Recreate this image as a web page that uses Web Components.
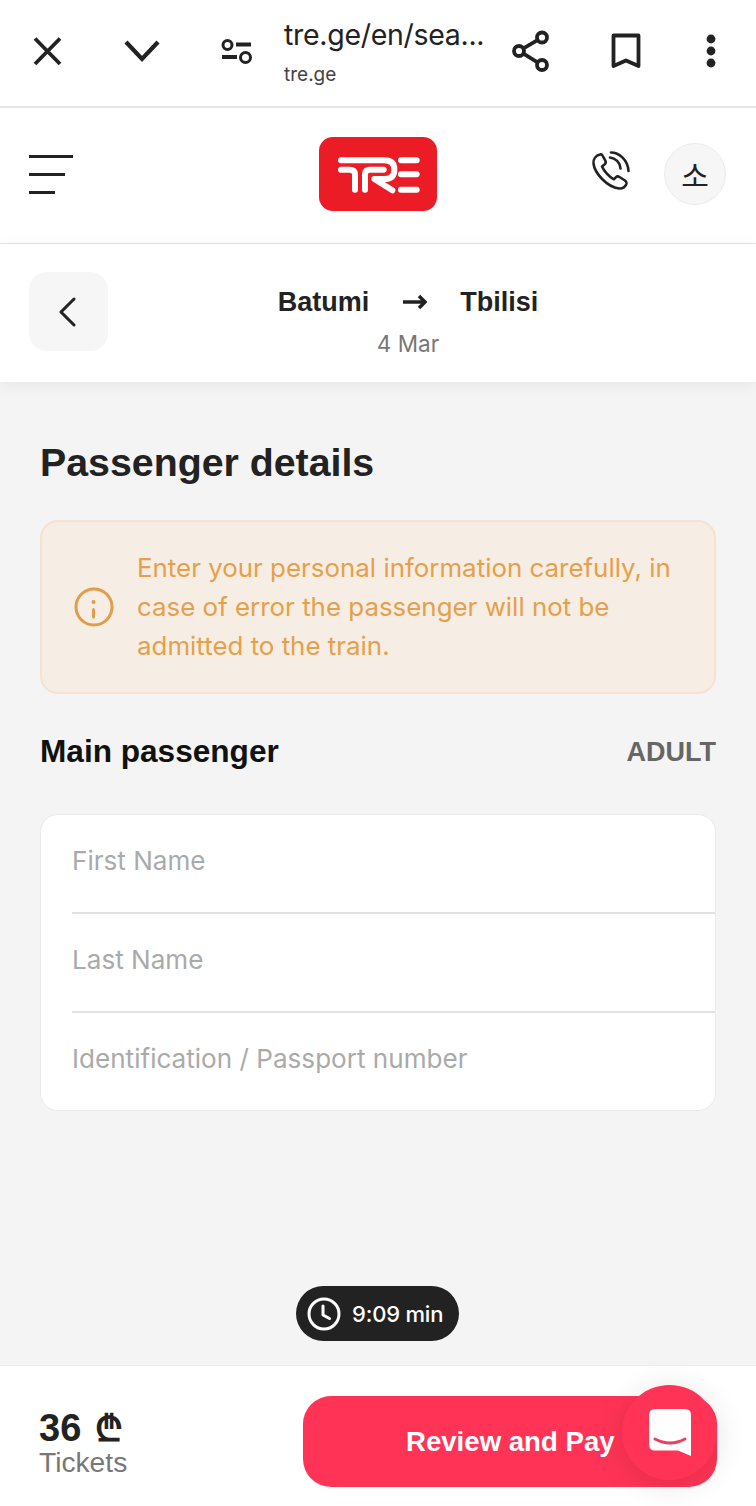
<!DOCTYPE html>
<html><head><meta charset="utf-8">
<style>
html,body{margin:0;padding:0;height:100%}
body{width:756px;height:1506px;overflow:hidden;background:#f4f4f4;font-family:"Liberation Sans",sans-serif;display:flex;flex-direction:column}
</style></head><body>
<browser-bar></browser-bar>
<site-header></site-header>
<route-bar from="Batumi" to="Tbilisi" date="4 Mar"></route-bar>
<main-page>
  <alert-box>Enter your personal information carefully, in case of error the passenger will not be admitted to the train.</alert-box>
  <passenger-form></passenger-form>
</main-page>
<timer-pill>9:09 min</timer-pill>
<pay-footer></pay-footer>
<script>
const LS='"Liberation Sans",sans-serif', IN='Inter,"Liberation Sans",sans-serif';
function def(name,html){customElements.define(name,class extends HTMLElement{
  constructor(){super();this.attachShadow({mode:'open'}).innerHTML=html(this)}
})}
def('browser-bar',()=>`<style>
:host{display:flex;flex:none;height:106px;background:#fff;border-bottom:2px solid #e6e6e6;position:relative;align-items:center;color:#222}
svg{flex:none;display:block}
.u{width:208px;margin-left:31px;align-self:flex-start;flex:none}
.a{font:400 28.500px/1 ${IN};margin-top:21px;white-space:nowrap;letter-spacing:-.3px}
.b{font:400 19px/1 ${IN};margin-top:15px;color:#444}
.ic{stroke:#222;fill:none;stroke-width:3.8}
</style>
<svg width="756" height="106" viewBox="0 0 756 106" style="position:absolute;left:0;top:0">
<g class="ic">
<path d="M35 38.500L60 64M60 38.500L35 64"/>
<path d="M126 42L142 59L158 42" stroke-width="4.200"/>
<circle cx="227.500" cy="45" r="4.500" stroke-width="3"/><path d="M236 44.500H251M222 57H237"/><circle cx="245.500" cy="57.500" r="5" stroke-width="3"/>
<circle cx="542" cy="37.500" r="5"/><circle cx="519" cy="51" r="5"/><circle cx="542" cy="65" r="5"/><path d="M523.500 48.300L537.500 40.200M523.500 53.700L537.500 62.300"/>
<path d="M613.500 35.500H638.500V66L626 60.500L613.500 66Z" stroke-linejoin="round"/>
</g>
<g fill="#222"><circle cx="711" cy="39" r="4.400"/><circle cx="711" cy="51" r="4.400"/><circle cx="711" cy="63" r="4.400"/></g>
</svg>
<div style="width:253px;flex:none"></div>
<div class="u"><div class="a">tre.ge/en/sea...</div><div class="b">tre.ge</div></div>`);

def('site-header',()=>`<style>
:host{display:flex;flex:none;height:135px;background:#fff;border-bottom:1px solid #e4e4e4;align-items:center;justify-content:space-between;padding:0 30px 0 29px;position:relative}
.h{display:flex;flex-direction:column;gap:14.500px;width:44px;margin-bottom:2px}
.h i{display:block;height:3.400px;background:#222}
.logo{position:absolute;left:319px;top:29px;display:block}
.r{display:flex;align-items:center;gap:33px;margin-bottom:3px}
.r svg{margin-bottom:6px}
.av{box-sizing:border-box;width:62px;height:62px;border-radius:50%;background:#f6f6f6;border:1px solid #ececec;display:flex;align-items:center;justify-content:center;font:400 30px/1 "Noto Sans CJK KR",sans-serif;color:#222}
</style>
<div class="h"><i></i><i style="width:36px"></i><i style="width:26px"></i></div>
<svg class="logo" width="118" height="74" viewBox="0 0 354 222">
<rect width="354" height="222" rx="42" fill="#ec1c27"/>
<g fill="none" stroke="#fff" stroke-width="18" stroke-linecap="round" stroke-linejoin="round">
<path d="M66 70H196Q226 70 226 98Q226 126 196 126H166L220 160"/>
<path d="M66 98H92Q108 98 108 112V158"/>
<path d="M138 158V112Q138 98 152 98H194"/>
<path d="M246 70H293M246 112H293M246 158H293"/>
</g></svg>
<div class="r">
<svg width="40" height="40" viewBox="0 0 40 40" fill="none" stroke="#222" stroke-width="2.600" stroke-linecap="round" stroke-linejoin="round">
<path d="M9 3.500C5 4.500 2 8 2.500 12.500C3.500 22 16 36 28 37.500C31.500 38 35 35.500 35.500 32.500C35.700 31 35 30.300 34 29.500L28.500 26C27 25 25.800 25.300 24.800 26.300L22.800 28.300C18 26 13 20 11 15.500L13.500 13.500C14.700 12.500 15 11 14.300 9.700L11.500 4.500C11 3.500 10 3.200 9 3.500Z"/>
<path d="M19 6.500C24.500 7 29 11.500 29.500 17.500"/>
<path d="M20 1.500C28 1.500 37 9 37.500 20"/>
</svg>
<div class="av">소</div></div>`);

def('route-bar',(el)=>`<style>
:host{display:flex;flex:none;height:138px;box-sizing:border-box;background:#fff;box-shadow:0 3px 14px rgba(0,0,0,.06);align-items:center;padding:0 48px 3px 29px;position:relative;z-index:1;color:#222}
.back{flex:none;width:79px;height:79px;border-radius:18px;background:#f6f6f6;display:flex;align-items:center;justify-content:center}
.back svg{margin-right:3px}
.c{flex:1;display:flex;flex-direction:column;align-items:center;margin-top:20px}
.t{display:flex;align-items:center;font:700 27px/32px ${LS};gap:33px}
.t svg{margin-left:1px}
.d{font:400 22.500px/28px ${IN};color:#777;margin-top:12px}
</style>
<div class="back"><svg width="17" height="30" viewBox="0 0 17 30" fill="none" stroke="#222" stroke-width="3" stroke-linecap="round" stroke-linejoin="round"><path d="M15 2L2 15L15 28"/></svg></div>
<div class="c"><div class="t"><span>${el.getAttribute('from')}</span>
<svg width="24" height="16" viewBox="0 0 24 16" fill="none" stroke="#222" stroke-width="3.500"><path d="M0 8H22M16 2L22 8L16 14"/></svg>
<span>${el.getAttribute('to')}</span></div><div class="d">${el.getAttribute('date')}</div></div>`);

def('main-page',()=>`<style>
:host{display:block;flex:1;padding:55px 40px 0;color:#222;min-height:0}
h1{margin:0 0 33px;font:700 39.300px/50px ${LS}}
</style><h1>Passenger details</h1><slot></slot>`);

def('alert-box',()=>`<style>
:host{display:flex;box-sizing:border-box;height:174px;align-items:center;gap:23px;padding:0 32px;background:#f6ede4;border:2px solid #f5e2cf;border-radius:18px;color:#e6a04a;font:400 25.900px/38.800px ${IN}}
svg{flex:none}
div{margin-top:1px}
</style><svg width="40" height="40" viewBox="0 0 40 40" fill="none" stroke="#e39c48" stroke-width="3"><circle cx="20" cy="20" r="18"/><path d="M19.500 22.500V30" stroke-linecap="round"/><circle cx="19.500" cy="15" r="2" fill="#e39c48" stroke="none"/></svg><div><slot></slot></div>`);

def('passenger-form',()=>`<style>
:host{display:block}
.h{display:flex;justify-content:space-between;align-items:center;height:50px;margin:33px 0 37px}
.m{font:700 31.600px/1 ${LS};color:#111}
.k{font:700 27px/1 ${LS};color:#666}
.card{box-sizing:border-box;height:296.500px;background:#fff;border:1px solid #eaeaea;border-radius:18px;padding-left:31px;display:flex;flex-direction:column;overflow:hidden}
.f{flex:1;box-sizing:border-box;font:400 26.100px/1 ${IN};color:#aaa;padding-top:33px;border-bottom:2px solid #e2e2e2}
.f:last-child{border:0}
</style><div class="h"><div class="m">Main passenger</div><div class="k">ADULT</div></div>
<div class="card"><div class="f">First Name</div><div class="f">Last Name</div><div class="f">Identification / Passport number</div></div>`);

def('timer-pill',()=>`<style>
:host{position:absolute;left:296px;top:1286px;height:55px;width:163px;box-sizing:border-box;border-radius:28px;background:#222;color:#fff;display:flex;align-items:center;gap:11px;padding-left:11px;font:500 22px/1 ${IN};letter-spacing:-.2px;z-index:2}
</style><svg width="34" height="34" viewBox="0 0 34 34" fill="none" stroke="#fff" stroke-width="3"><circle cx="17" cy="17" r="15"/><path d="M16 9V18L22.500 21.500" stroke-linecap="round" stroke-linejoin="round"/></svg><span><slot></slot></span>`);

def('pay-footer',()=>`<style>
:host{display:flex;flex:none;height:141px;box-sizing:border-box;background:#fff;border-top:1px solid #eee;padding:30px 39px 0 39px;justify-content:space-between;position:relative;z-index:3}
.p{font:700 38px/34px "Liberation Sans","Noto Sans",sans-serif;color:#222;margin-top:15px}
.p span{font-family:"DejaVu Sans",sans-serif;font-size:36px;margin-left:3px}
.tk{font:400 28.200px/30px ${LS};color:#777;margin-top:1px}
.btn{width:414px;height:91px;border-radius:28px;background:#ff3355;color:#fff;font:700 27.600px/91px ${LS};box-sizing:border-box;padding-left:103px}
.chat{position:absolute;left:622px;top:19px;width:95px;height:95px;border-radius:50%;background:#ff3355;box-shadow:0 4px 30px rgba(0,0,0,.12);display:flex;align-items:center;justify-content:center}
</style><div><div class="p">36 <span>₾</span></div><div class="tk">Tickets</div></div>
<div class="btn">Review and Pay</div>
<div class="chat"><svg width="42" height="48" viewBox="0 0 42 48"><path d="M6 0H36Q42 0 42 6V47L29 41.500H6Q0 41.500 0 35.500V6Q0 0 6 0Z" fill="#fff"/><path d="M6 30Q21 38 36 30" fill="none" stroke="#ee3f5e" stroke-width="3" stroke-linecap="round"/></svg></div>`);
</script>
</body></html>
